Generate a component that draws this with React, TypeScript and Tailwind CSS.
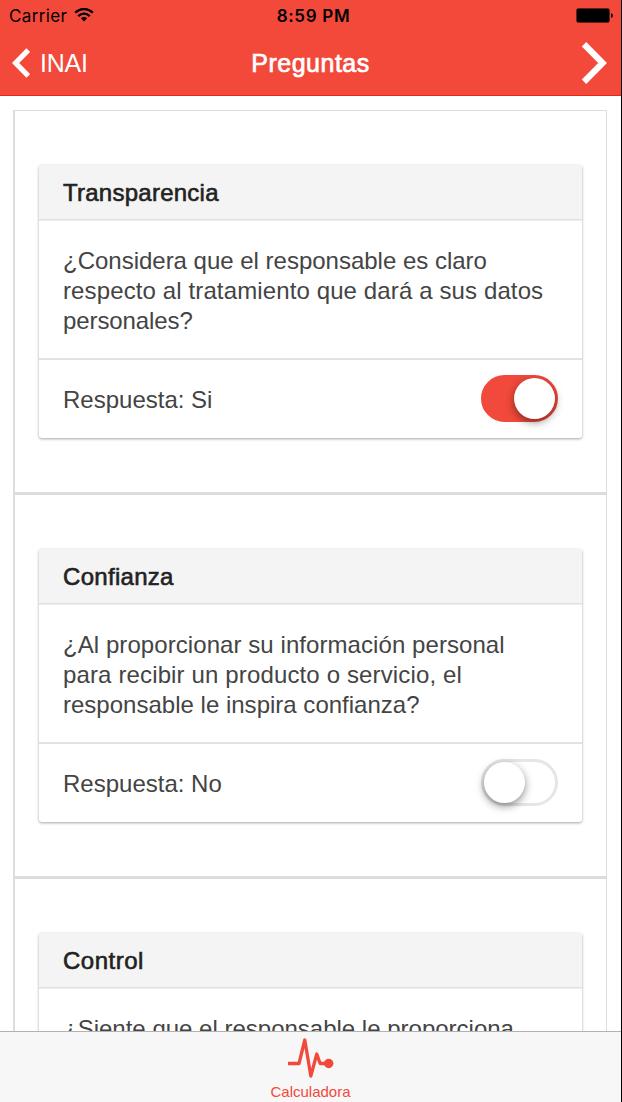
import { useState } from "react";

type Question = { title: string; lines: { text: string; spacing: string }[]; answer: boolean; titleSpacing: string };

const questions: Question[] = [
  {
    title: "Transparencia",
    titleSpacing: "tracking-[0.25px]",
    answer: true,
    lines: [
      { text: "¿Considera que el responsable es claro", spacing: "tracking-[-0.01px]" },
      { text: "respecto al tratamiento que dará a sus datos", spacing: "tracking-[0.12px]" },
      { text: "personales?", spacing: "tracking-[-0.1px]" },
    ],
  },
  {
    title: "Confianza",
    titleSpacing: "tracking-[0.3px]",
    answer: false,
    lines: [
      { text: "¿Al proporcionar su información personal", spacing: "tracking-[0.07px]" },
      { text: "para recibir un producto o servicio, el", spacing: "tracking-[0.14px]" },
      { text: "responsable le inspira confianza?", spacing: "tracking-[0.01px]" },
    ],
  },
  {
    title: "Control",
    titleSpacing: "tracking-[0.5px]",
    answer: false,
    lines: [{ text: "¿Siente que el responsable le proporciona", spacing: "tracking-[0px]" }],
  },
];

function Toggle({ on, onChange }: { on: boolean; onChange: () => void }) {
  return (
    <button
      role="switch"
      aria-checked={on}
      onClick={onChange}
      className={`mb-[2px] flex h-[47px] w-[77px] items-center rounded-full border-[3px] ${
        on ? "justify-end border-[#f1493b] bg-[#f1493b]" : "justify-start border-[#e6e6e6] bg-white"
      }`}
    >
      <span className="size-[41px] rounded-full bg-white shadow-[0_3px_9px_rgba(0,0,0,0.45)]" />
    </button>
  );
}

function Card({ question }: { question: Question }) {
  const [on, setOn] = useState(question.answer);
  return (
    <section className="flex h-[384px] shrink-0 flex-col border-b-[3px] border-[#dddddd] px-6 pt-[54px]">
      <div className="h-[273px] w-[543px] rounded-[3px] bg-white shadow-[0_1px_3px_rgba(0,0,0,0.36)]">
        <h2 className={`h-[55px] rounded-t-[3px] border-b border-[#dedede] bg-[#f4f4f4] pl-6 text-[24px] leading-[56px] text-[#222222] [-webkit-text-stroke:0.6px_#222222] ${question.titleSpacing}`}>
          {question.title}
        </h2>
        <div className="h-[140px] border-t border-b-2 border-t-[#eeeeee] border-b-[#e2e2e2] pt-[25px] pl-6 text-[24px] leading-[30px] text-[#444444]">
          {question.lines.map((line) => (
            <p key={line.text} className={`whitespace-nowrap ${line.spacing}`}>{line.text}</p>
          ))}
        </div>
        <div className="flex h-[78px] items-center justify-between pr-6 pl-6 text-[24px] text-[#444444]">
          <span className="pt-[2px]">Respuesta: {on ? "Si" : "No"}</span>
          <Toggle on={on} onChange={() => setOn(!on)} />
        </div>
      </div>
    </section>
  );
}

export default function App() {
  return (
    <div className="flex h-[1102px] w-[622px] flex-col overflow-hidden border-r border-black bg-white font-['Liberation_Sans',sans-serif]">
      <header className="h-24 shrink-0 border-b border-[#e52818] bg-[#f2493b]">
        <div className="grid h-8 grid-cols-3 items-center font-['Inter',sans-serif] text-[17px] leading-8 text-black">
          <div className="flex items-center gap-[7px] pl-[9px]">
            <span className="tracking-[0.35px]">Carrier</span>
            <svg width="20" height="14" viewBox="0 0 20 14" fill="none" stroke="black" strokeWidth="2.3" className="-mt-[2px]">
              <path d="M1.2 4.8C6.2-.1 13.8-.1 18.8 4.8M4.3 8.1C7.6 4.9 12.4 4.9 15.7 8.1" />
              <path d="M10 13.4 6.9 10.3C8.7 8.6 11.3 8.6 13.1 10.3Z" fill="black" stroke="none" />
            </svg>
          </div>
          <span className="pl-[6px] text-center font-semibold tracking-[0.7px]">8:59 PM</span>
          <svg className="-mt-px mr-2 justify-self-end" width="37" height="15" viewBox="0 0 37 15">
            <rect x="0.5" y="0.5" width="33" height="14" rx="2" fill="black" stroke="#681f19" />
            <path d="M35 5v5q2-1 2-2.5T35 5Z" fill="black" />
          </svg>
        </div>
        <nav className="grid h-[62px] grid-cols-3 items-center text-white">
          <div className="flex items-center pl-3">
            <svg width="18" height="30" viewBox="0 0 18 30" fill="none" stroke="white" strokeWidth="5.2">
              <path d="M16.3 2 3.6 15l12.7 13" />
            </svg>
            <span className="ml-[10px] pt-[2px] text-[25px] tracking-[-0.2px]">INAI</span>
          </div>
          <h1 className="pt-[2px] text-center text-[25px] tracking-[0.5px] [-webkit-text-stroke:0.7px_white]">Preguntas</h1>
          <svg className="mr-[14px] justify-self-end" width="26" height="42" viewBox="0 0 26 42" fill="none" stroke="white" strokeWidth="6.2">
            <path d="m3 2.2 18.6 18.8L3 39.8" />
          </svg>
        </nav>
      </header>
      <main className="min-h-0 flex-1 overflow-hidden pt-[14px] pl-[13px]">
        <div className="flex w-[594px] flex-col border-t border-r border-l-2 border-[#dddddd]">
          {questions.map((q) => <Card key={q.title} question={q} />)}
        </div>
      </main>
      <footer className="flex h-[71px] shrink-0 flex-col items-center border-t border-[#b2b2b2] bg-[#f7f7f7] pt-[6px] text-[#f2493b]">
        <svg width="46" height="40" viewBox="0 0 46 40" fill="none" stroke="currentColor" strokeWidth="3.3" className="shrink-0">
          <path d="M0 25.5H11L16.8 2l6 36 6-22 3.3 9.5H40" strokeLinejoin="round" />
          <circle cx="40.7" cy="25.5" r="4.7" fill="currentColor" stroke="none" />
        </svg>
        <span className="mt-[5px] text-[15px] leading-[17px]">Calculadora</span>
      </footer>
    </div>
  );
}
